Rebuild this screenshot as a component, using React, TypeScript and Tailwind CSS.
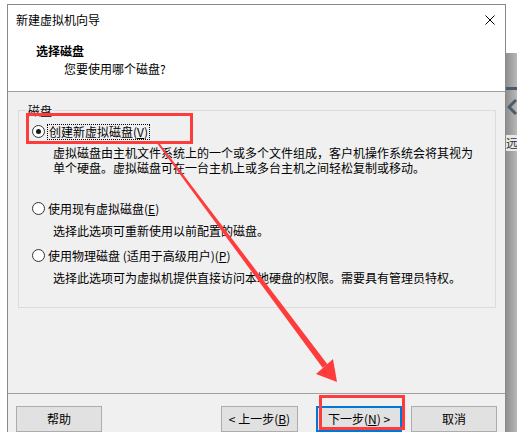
import React from "react";

function Radio({ checked }: { checked?: boolean }) {
  return (
    <span className="flex h-[13px] w-[13px] shrink-0 items-center justify-center rounded-full border border-[#333333] bg-white">
      {checked && <span className="h-[5px] w-[5px] rounded-full bg-[#1a1a1a]" />}
    </span>
  );
}

function Btn({ children, w, primary }: { children: React.ReactNode; w: string; primary?: boolean }) {
  return (
    <div
      className={
        "flex h-[26px] items-center justify-center bg-[#e1e1e1] text-[12px] leading-[14px] text-black " +
        w +
        (primary ? " border-2 border-[#0078d7]" : " border border-[#adadad]")
      }
    >
      {children}
    </div>
  );
}

export default function App() {
  return (
    <div className="relative flex h-[432px] w-[517px] overflow-hidden bg-white font-['Noto_Sans_CJK_SC','Noto_Sans',sans-serif] text-black">
      {/* dialog column */}
      <div className="pl-[7px] pt-[4px]">
        <div className="flex h-[450px] w-[499px] flex-col border border-[#8a8a8a] bg-white">
          {/* title bar */}
          <div className="flex h-[30px] items-center justify-between pl-[8px] pr-[10px]">
            <span className="text-[12px] leading-[14px]">新建虚拟机向导</span>
            <svg width="10" height="10" viewBox="0 0 10 10">
              <path d="M0.5 0.5 L9.5 9.5 M9.5 0.5 L0.5 9.5" stroke="#000" strokeWidth="1" />
            </svg>
          </div>
          {/* header */}
          <div className="flex h-[56px] flex-col pt-[8px]">
            <div className="pl-[28px] text-[12px] font-bold leading-[16px]">选择磁盘</div>
            <div className="mt-[2px] pl-[56px] text-[12px] leading-[16px]">您要使用哪个磁盘?</div>
          </div>
          {/* body */}
          <div className="flex h-[302px] flex-col border-t border-[#a0a0a0] bg-[#f0f0f0] pt-[18px]">
            <div className="relative ml-[10px] h-[198px] w-[478px] border border-[#dcdcdc] pl-[13px] pt-[12px]">
              <span className="absolute left-[8px] top-[-6px] bg-[#f0f0f0] px-[1px] text-[12px] leading-[12px]">磁盘</span>
              <div className="flex h-[17px] items-center">
                <Radio checked />
                <span className="ml-[2px] border border-dotted border-black px-[1px] text-[12px] leading-[14px]">
                  创建新虚拟磁盘(<span className="underline">V</span>)
                </span>
              </div>
              <div className="mt-[5px] pl-[21px] text-[12px] leading-[15px]">
                虚拟磁盘由主机文件系统上的一个或多个文件组成，客户机操作系统会将其视为
                <br />
                单个硬盘。虚拟磁盘可在一台主机上或多台主机之间轻松复制或移动。
              </div>
              <div className="mt-[25px] flex h-[17px] items-center">
                <Radio />
                <span className="ml-[3px] text-[12px] leading-[14px]">
                  使用现有虚拟磁盘(<span className="underline">E</span>)
                </span>
              </div>
              <div className="mt-[6px] pl-[21px] text-[12px] leading-[15px]">选择此选项可重新使用以前配置的磁盘。</div>
              <div className="mt-[9px] flex h-[17px] items-center">
                <Radio />
                <span className="ml-[3px] text-[12px] leading-[14px]">
                  使用物理磁盘 (适用于高级用户)(<span className="underline">P</span>)
                </span>
              </div>
              <div className="mt-[6px] pl-[21px] text-[12px] leading-[15px]">
                选择此选项可为虚拟机提供直接访问本地硬盘的权限。需要具有管理员特权。
              </div>
            </div>
          </div>
          {/* footer */}
          <div className="flex flex-1 items-start border-t border-[#a0a0a0] bg-[#f0f0f0] pl-[8px] pr-[8px] pt-[12px]">
            <Btn w="w-[86px]">帮助</Btn>
            <div className="flex-1" />
            <Btn w="w-[77px]">
              &lt; 上一步(<span className="underline">B</span>)
            </Btn>
            <div className="ml-[18px]">
              <Btn w="w-[86px]" primary>
                下一步(<span className="underline">N</span>) &gt;
              </Btn>
            </div>
            <div className="ml-[9px]">
              <Btn w="w-[86px]">取消</Btn>
            </div>
          </div>
        </div>
      </div>
      {/* background app strip on the right */}
      <div className="flex flex-1 flex-col">
        <div className="h-[53px] bg-white" />
        <div className="flex flex-1 flex-col bg-gradient-to-r from-[#8f8f8f] to-[#bdbdbd]">
          <div className="mt-[34px] h-[3px] w-full bg-[#4d5b68]" />
          <svg className="mt-[9px] ml-[1px]" width="10" height="16" viewBox="0 0 10 16">
            <path d="M9 1 L2 8 L9 15" stroke="#4d5b68" strokeWidth="3" fill="none" />
          </svg>
          <div className="mt-[20px] h-[16px] overflow-hidden bg-[#e9e9e9] text-[12px] leading-[16px] text-[#333]">远</div>
        </div>
      </div>
      {/* red annotations overlay */}
      <svg className="pointer-events-none absolute left-0 top-0" width="517" height="432" viewBox="0 0 517 432">
        <rect x="27.5" y="114.5" width="164" height="28" fill="none" stroke="#ff3c3c" strokeWidth="3" />
        <rect x="320.5" y="396.5" width="83" height="32" fill="none" stroke="#ff3c3c" strokeWidth="3" />
        <polygon points="158.8,142.4 157.2,143.6 322.6,367.8 327.4,364.2" fill="#ff3c3c" />
        <polygon points="337,382 316,374 333,359" fill="#ff3c3c" />
      </svg>
    </div>
  );
}
